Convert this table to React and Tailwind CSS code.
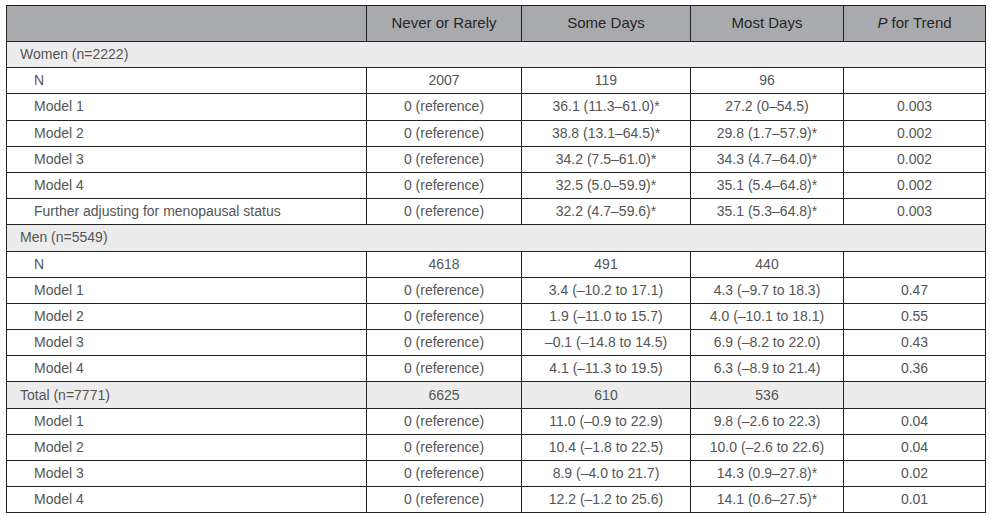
import React from "react";

const rows = [
  { type: "section", label: "Women (n=2222)" },
  { label: "N", v: ["2007", "119", "96", ""] },
  { label: "Model 1", v: ["0 (reference)", "36.1 (11.3–61.0)*", "27.2 (0–54.5)", "0.003"] },
  { label: "Model 2", v: ["0 (reference)", "38.8 (13.1–64.5)*", "29.8 (1.7–57.9)*", "0.002"] },
  { label: "Model 3", v: ["0 (reference)", "34.2 (7.5–61.0)*", "34.3 (4.7–64.0)*", "0.002"] },
  { label: "Model 4", v: ["0 (reference)", "32.5 (5.0–59.9)*", "35.1 (5.4–64.8)*", "0.002"] },
  { label: "Further adjusting for menopausal status", v: ["0 (reference)", "32.2 (4.7–59.6)*", "35.1 (5.3–64.8)*", "0.003"] },
  { type: "section", label: "Men (n=5549)" },
  { label: "N", v: ["4618", "491", "440", ""] },
  { label: "Model 1", v: ["0 (reference)", "3.4 (–10.2 to 17.1)", "4.3 (–9.7 to 18.3)", "0.47"] },
  { label: "Model 2", v: ["0 (reference)", "1.9 (–11.0 to 15.7)", "4.0 (–10.1 to 18.1)", "0.55"] },
  { label: "Model 3", v: ["0 (reference)", "–0.1 (–14.8 to 14.5)", "6.9 (–8.2 to 22.0)", "0.43"] },
  { label: "Model 4", v: ["0 (reference)", "4.1 (–11.3 to 19.5)", "6.3 (–8.9 to 21.4)", "0.36"] },
  { type: "total", label: "Total (n=7771)", v: ["6625", "610", "536", ""] },
  { label: "Model 1", v: ["0 (reference)", "11.0 (–0.9 to 22.9)", "9.8 (–2.6 to 22.3)", "0.04"] },
  { label: "Model 2", v: ["0 (reference)", "10.4 (–1.8 to 22.5)", "10.0 (–2.6 to 22.6)", "0.04"] },
  { label: "Model 3", v: ["0 (reference)", "8.9 (–4.0 to 21.7)", "14.3 (0.9–27.8)*", "0.02"] },
  { label: "Model 4", v: ["0 (reference)", "12.2 (–1.2 to 25.6)", "14.1 (0.6–27.5)*", "0.01"] },
];

export default function App() {
  return (
    <div className="w-[990px] h-[517px] bg-white pt-[5px] pl-[6px]" style={{ fontFamily: '"Liberation Sans", Arial, sans-serif' }}>
      <table className="border-collapse w-[979px] table-fixed text-[14px] text-[#555]">
        <colgroup>
          <col className="w-[360px]" />
          <col className="w-[155px]" />
          <col className="w-[169px]" />
          <col className="w-[153px]" />
          <col className="w-[142px]" />
        </colgroup>
        <thead>
          <tr className="h-[36px] bg-[#a9aaae] text-[#262626] text-[15px]">
            <th className="border border-[#222]"></th>
            <th className="border border-[#222] font-normal text-center">Never or Rarely</th>
            <th className="border border-[#222] font-normal text-center">Some Days</th>
            <th className="border border-[#222] font-normal text-center">Most Days</th>
            <th className="border border-[#222] font-normal text-center"><i>P</i> for Trend</th>
          </tr>
        </thead>
        <tbody>
          {rows.map((r, i) => {
            if (r.type === "section") {
              return (
                <tr key={i} className="h-[26.2px] bg-[#ececec]">
                  <td colSpan={5} className="border border-[#222] pl-[13px] py-0">{r.label}</td>
                </tr>
              );
            }
            const isTotal = r.type === "total";
            return (
              <tr key={i} className={isTotal ? "h-[26.2px] bg-[#ececec]" : "h-[26.2px]"}>
                <td className={(isTotal ? "pl-[13px]" : "pl-[27px]") + " border border-[#222] py-0"}>{r.label}</td>
                {r.v.map((c, j) => (
                  <td key={j} className="border border-[#222] text-center py-0">{c}</td>
                ))}
              </tr>
            );
          })}
        </tbody>
      </table>
    </div>
  );
}
